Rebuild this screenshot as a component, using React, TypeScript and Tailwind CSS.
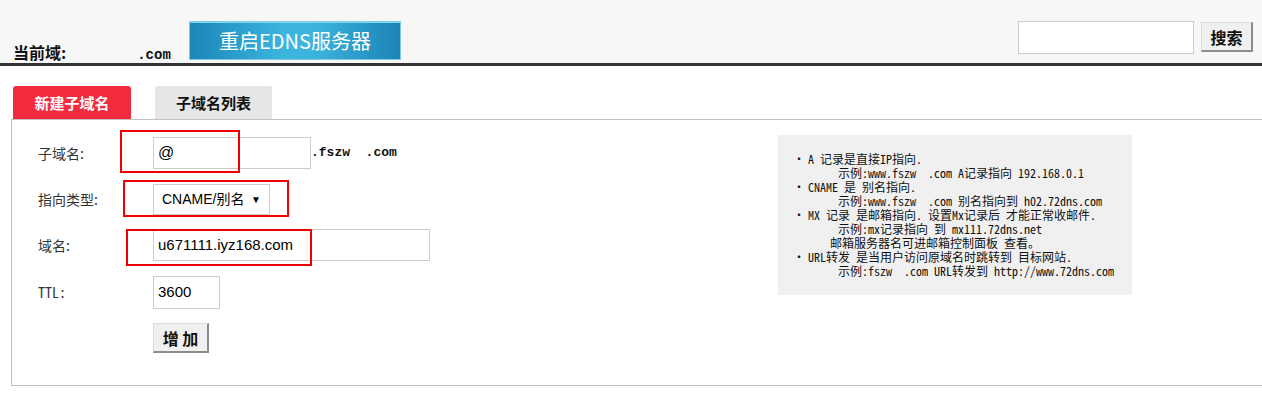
import React from "react";

const monoCjk = '"Noto Sans Mono CJK SC", "Liberation Mono", "Noto Sans CJK SC", monospace';

export default function App() {
  return (
    <div className="w-[1262px] h-[400px] overflow-hidden bg-white font-['Noto_Sans_CJK_SC',sans-serif] text-[#222]">
      {/* Header */}
      <div className="h-[66px] bg-[#f7f7f7] border-b-[3px] border-[#303236] flex items-start">
        <div className="w-[189px] pl-[13px] pt-[42px] flex items-baseline">
          <span className="text-[16px] font-bold leading-[20px] text-[#111]">当前域:</span>
          <span className="ml-[71px] text-[14px] font-bold leading-[20px] font-['Liberation_Mono',monospace] text-[#111]">.com</span>
        </div>
        <button className="mt-[21px] w-[212px] h-[39px] border border-[#86c9dd] bg-[linear-gradient(to_right,#1b86b9,#3cb5df_45%,#3cb3dd_60%,#1b84b6)] text-white text-[20px] leading-[37px] text-center shadow-[inset_0_1px_0_#7dd6f2]">
          重启EDNS服务器
        </button>
        <div className="ml-auto mr-[9px] flex items-start">
          <input className="mt-[21px] w-[176px] h-[33px] border border-[#cccccc] bg-white outline-none" />
          <button className="ml-[7px] mt-[22px] w-[52px] h-[30px] bg-[#f0f0f0] border border-[#dcdcdc] border-r-[2px] border-b-[2px] border-r-[#8c8c8c] border-b-[#8c8c8c] text-[16px] font-bold text-[#111] leading-[26px]">
            搜索
          </button>
        </div>
      </div>

      {/* Tabs */}
      <div className="mt-[20px] pl-[13px] flex gap-[24px]">
        <div className="w-[118px] h-[33px] bg-[#f32b3e] rounded-t-[3px] text-white text-[15px] font-bold leading-[33px] text-center">
          新建子域名
        </div>
        <div className="w-[117px] h-[33px] bg-[#e6e6e6] rounded-t-[2px] text-[#111] text-[15px] font-bold leading-[33px] text-center">
          子域名列表
        </div>
      </div>

      {/* Content box */}
      <div className="relative ml-[11px] w-[1262px] h-[267px] border border-[#c0c0c0]">
        <div className="flex items-start pl-[26px]">
          <div className="w-[740px] pt-[17px]">
            {/* Row 1 */}
            <div className="flex items-center h-[32px]">
              <div className="w-[115px] text-[14px] text-[#333]">子域名:</div>
              <div className="w-[158px] h-[32px] border border-[#cccccc] pl-[4px] flex items-center text-[16px] text-black font-['Liberation_Sans',sans-serif]">@</div>
              <span className="text-[13px] font-bold whitespace-pre font-['Liberation_Mono',monospace] text-[#111]">.fszw  .com</span>
            </div>
            {/* Row 2 */}
            <div className="flex items-center h-[31px] mt-[15px]">
              <div className="w-[115px] text-[14px] text-[#333]">指向类型:</div>
              <div className="w-[117px] h-[31px] border border-[#cccccc] pl-[8px] pr-[8px] flex items-center justify-between text-[14px] text-black font-['Liberation_Sans','Noto_Sans_CJK_SC',sans-serif]">
                <span>CNAME/别名</span>
                <span className="text-[10px]">▼</span>
              </div>
            </div>
            {/* Row 3 */}
            <div className="flex items-center h-[32px] mt-[14px]">
              <div className="w-[115px] text-[14px] text-[#333]">域名:</div>
              <div className="w-[277px] h-[32px] border border-[#cccccc] pl-[4px] flex items-center text-[15px] text-black font-['Liberation_Sans',sans-serif]">u671111.iyz168.com</div>
            </div>
            {/* Row 4 */}
            <div className="flex items-center h-[33px] mt-[15px]">
              <div className="w-[115px] text-[14px] text-[#333]" style={{ fontFamily: monoCjk }}>TTL:</div>
              <div className="w-[67px] h-[33px] border border-[#cccccc] pl-[4px] flex items-center text-[15px] text-black font-['Liberation_Sans',sans-serif]">3600</div>
            </div>
            {/* Row 5 */}
            <div className="flex items-center mt-[14px]">
              <div className="w-[115px]" />
              <button className="w-[56px] h-[30px] bg-[#f0f0f0] border border-[#dcdcdc] border-r-[2px] border-b-[2px] border-r-[#8c8c8c] border-b-[#8c8c8c] text-[16px] font-bold text-[#111] leading-[26px] whitespace-pre">
                增 加
              </button>
            </div>
          </div>

          {/* Info box */}
          <div
            className="mt-[15px] w-[354px] h-[160px] bg-[#f0f0f0] pt-[17px] text-[12px] leading-[14px] text-[#111]"
            style={{ fontFamily: monoCjk }}
          >
            <div className="flex h-[14px]"><span className="w-[30px] pl-[15px]">•</span><span>A 记录是直接IP指向.</span></div>
            <div className="h-[14px] pl-[60px] whitespace-pre">示例:www.fszw  .com A记录指向 192.168.0.1</div>
            <div className="flex h-[14px]"><span className="w-[30px] pl-[15px]">•</span><span>CNAME 是 别名指向.</span></div>
            <div className="h-[14px] pl-[60px] whitespace-pre">示例:www.fszw  .com 别名指向到 h02.72dns.com</div>
            <div className="flex h-[14px]"><span className="w-[30px] pl-[15px]">•</span><span className="whitespace-pre">MX 记录 是邮箱指向. 设置Mx记录后 才能正常收邮件.</span></div>
            <div className="h-[14px] pl-[60px] whitespace-pre">示例:mx记录指向 到 mx111.72dns.net</div>
            <div className="h-[14px] pl-[52px] whitespace-pre">邮箱服务器名可进邮箱控制面板 查看。</div>
            <div className="flex h-[14px]"><span className="w-[30px] pl-[15px]">•</span><span className="whitespace-pre">URL转发 是当用户访问原域名时跳转到 目标网站.</span></div>
            <div className="h-[14px] pl-[60px] whitespace-pre">示例:fszw  .com URL转发到 http://www.72dns.com</div>
          </div>
        </div>

        {/* Red annotation boxes */}
        <div className="absolute left-[108px] top-[10px] w-[120px] h-[43px] border-[2px] border-[#f00000]" />
        <div className="absolute left-[111px] top-[60px] w-[166px] h-[37px] border-[2px] border-[#f00000]" />
        <div className="absolute left-[114px] top-[109px] w-[186px] h-[37px] border-[2px] border-[#f00000]" />
      </div>
    </div>
  );
}
